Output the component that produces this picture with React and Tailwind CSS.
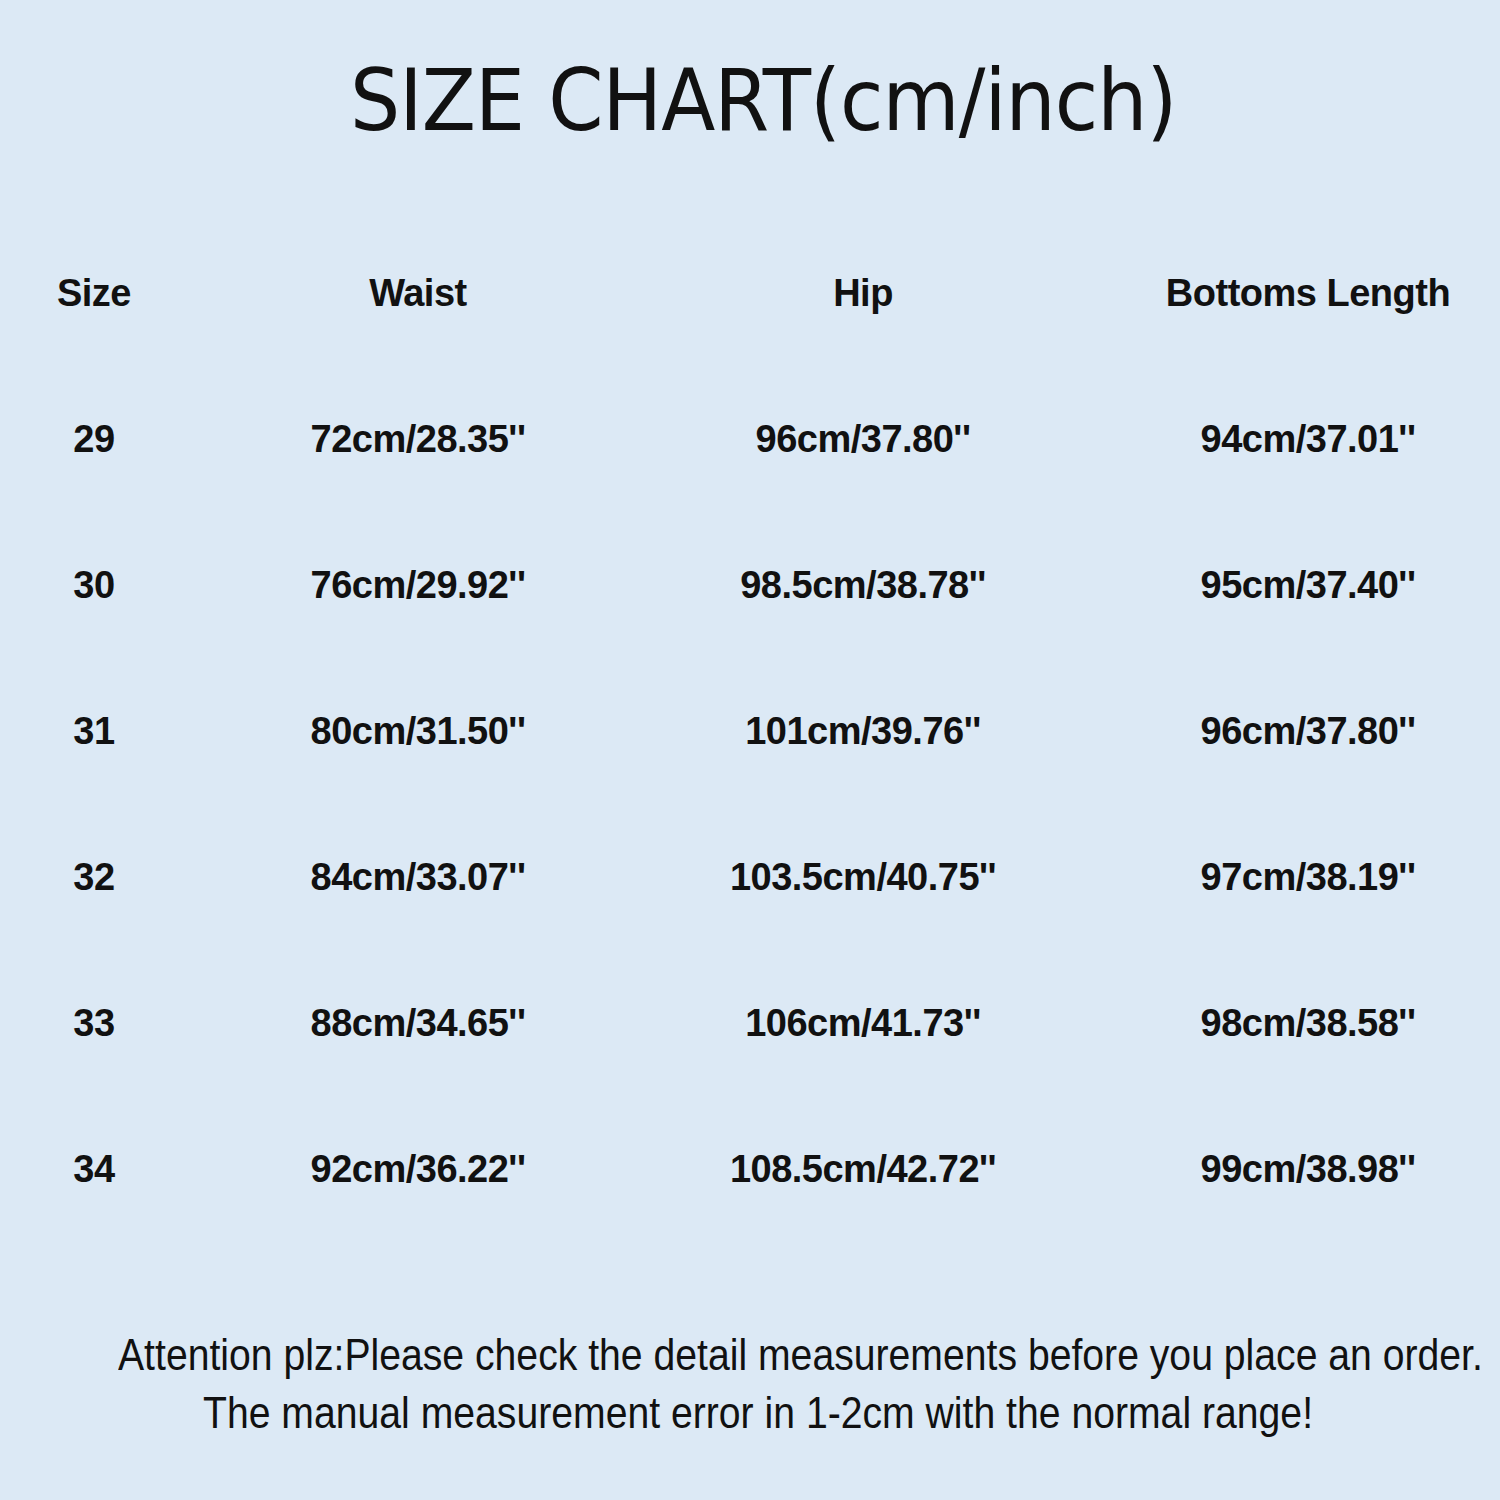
import React from 'react';

const rows = [
  ['29', "72cm/28.35''", "96cm/37.80''", "94cm/37.01''"],
  ['30', "76cm/29.92''", "98.5cm/38.78''", "95cm/37.40''"],
  ['31', "80cm/31.50''", "101cm/39.76''", "96cm/37.80''"],
  ['32', "84cm/33.07''", "103.5cm/40.75''", "97cm/38.19''"],
  ['33', "88cm/34.65''", "106cm/41.73''", "98cm/38.58''"],
  ['34', "92cm/36.22''", "108.5cm/42.72''", "99cm/38.98''"],
];

const Row = ({ cells }) => (
  <div className="grid grid-cols-[188px_460px_430px_422px] h-[146px] items-center">
    {cells.map((c, i) => (
      <div
        key={i}
        className={`text-center ${i === 3 ? 'pl-[38px]' : ''} text-[38px] font-bold tracking-[-0.5px]`}
      >
        {c}
      </div>
    ))}
  </div>
);

export default function App() {
  return (
    <div className="w-[1500px] h-[1500px] bg-[#dce9f5] text-[#111] font-['Liberation_Sans',Arial,sans-serif] overflow-hidden">
      <div className="h-[200px] flex items-center justify-center pl-[26px]">
        <h1 className="text-[86px] font-normal tracking-[-1px] leading-none font-['DejaVu_Sans',sans-serif] scale-x-[0.92]">
          SIZE CHART(cm/inch)
        </h1>
      </div>

      <div className="pt-[20px]">
        <Row cells={['Size', 'Waist', 'Hip', 'Bottoms Length']} />
        {rows.map((r) => (
          <Row key={r[0]} cells={r} />
        ))}
      </div>

      <div className="pt-[84px] text-[44px] leading-[58px]">
        <p className="pl-[118px] whitespace-nowrap">
          <span className="inline-block origin-left scale-x-[0.89]">
            Attention plz:Please check the detail measurements before you place an order.
          </span>
        </p>
        <p className="pl-[203px] whitespace-nowrap">
          <span className="inline-block origin-left scale-x-[0.89]">
            The manual measurement error in 1-2cm with the normal range!
          </span>
        </p>
      </div>
    </div>
  );
}
